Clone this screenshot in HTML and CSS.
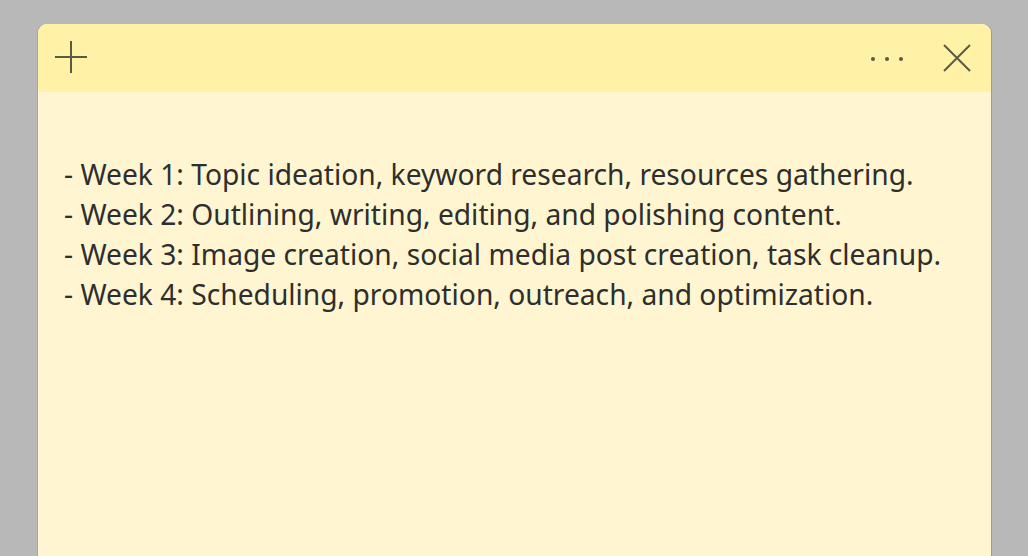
FILE: index.html
```html
<!DOCTYPE html>
<html lang="en">
<head>
    <meta charset="UTF-8">
    <title>Sticky Note</title>
    <link rel="stylesheet" href="styles.css">
</head>
<body>
    <div class="note">
        <div class="note-bar">
            <button class="icon-btn add" title="New note">
                <svg width="34" height="34" viewBox="0 0 34 34"><path d="M17 1v32M1 17h32" stroke="#5b5a45" stroke-width="2" fill="none"/></svg>
            </button>
            <div class="bar-right">
                <button class="icon-btn more" title="Menu">
                    <svg width="34" height="6" viewBox="0 0 34 6"><circle cx="3" cy="3" r="2" fill="#5b5a45"/><circle cx="17" cy="3" r="2" fill="#5b5a45"/><circle cx="31" cy="3" r="2" fill="#5b5a45"/></svg>
                </button>
                <button class="icon-btn close" title="Close">
                    <svg width="28" height="28" viewBox="0 0 28 28"><path d="M1 1l26 26M27 1L1 27" stroke="#5b5a45" stroke-width="2" fill="none"/></svg>
                </button>
            </div>
        </div>
        <div class="note-body">
            <p>- Week 1: Topic ideation, keyword research, resources gathering.</p>
            <p>- Week 2: Outlining, writing, editing, and polishing content.</p>
            <p>- Week 3: Image creation, social media post creation, task cleanup.</p>
            <p>- Week 4: Scheduling, promotion, outreach, and optimization.</p>
        </div>
    </div>
</body>
</html>
```

FILE: styles.css
```css
html, body {
    margin: 0;
    padding: 0;
    height: 100%;
    overflow: hidden;
}
body {
    background: #b8b8b8;
    font-family: "Noto Sans", "Open Sans", sans-serif;
    padding: 24px 37px 0 38px;
    box-sizing: border-box;
}
.note {
    height: 100%;
    background: #fff6d1;
    border-radius: 9px 9px 0 0;
    overflow: hidden;
    box-shadow: 1px 0 0 #9c9c92, -1px 0 0 #a8a8a0;
}
.note-bar {
    height: 68px;
    background: #fff1a6;
    display: flex;
    align-items: center;
    justify-content: space-between;
    padding: 0 20px 0 16px;
}
.bar-right {
    display: flex;
    align-items: center;
    gap: 39px;
}
.icon-btn {
    background: none;
    border: none;
    padding: 0;
    display: flex;
    cursor: pointer;
}
.add {
    margin-top: -2px;
}
.more {
    margin-top: 2px;
}
.note-body {
    padding: 62px 26px 0 26px;
    color: #2e2e2e;
    font-size: 28.2px;
}
.note-body p {
    margin: 0;
    line-height: 40px;
}
```
